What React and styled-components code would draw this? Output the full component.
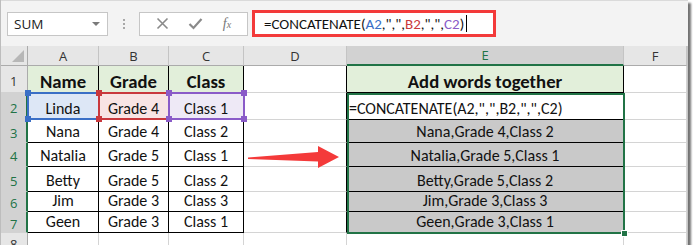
import React from "react";
import styled, { createGlobalStyle, css } from "styled-components";

const Global = createGlobalStyle`
  html, body { margin: 0; padding: 0; background: #ffffff; }
  * { box-sizing: border-box; }
`;

const GREEN = "#217346";
const CELL_FONT = `"Carlito", "Lato", "Liberation Sans", sans-serif`;
const UI_FONT = `"Open Sans", "Noto Sans", sans-serif`;

const Window = styled.div`
  width: 688px;
  height: 245px;
  overflow: hidden;
  background: #ffffff;
  border-left: 1px solid #bdbdbd;
  box-shadow: 3px 3px 2px rgba(0, 0, 0, 0.55);
  display: flex;
  flex-direction: column;
`;

const FormulaBar = styled.div`
  height: 46px;
  flex: none;
  background: #f3f3f3;
  border-top: 1px solid #dadada;
  display: flex;
  align-items: center;
  padding-left: 6px;
`;

const NameBox = styled.div`
  width: 101px;
  height: 24px;
  background: #fff;
  border: 1px solid #c6c6c6;
  display: flex;
  align-items: center;
  justify-content: space-between;
  padding: 0 7px 0 6px;
  font-family: ${UI_FONT};
  font-size: 13.5px;
  color: #222;
`;

const Caret = styled.span`
  width: 0;
  height: 0;
  border-left: 4px solid transparent;
  border-right: 4px solid transparent;
  border-top: 4px solid #7a7a7a;
`;

const Dots = styled.div`
  width: 31px;
  display: flex;
  flex-direction: column;
  align-items: center;
  gap: 2px;
  span {
    width: 2px;
    height: 2px;
    background: #a8a8a8;
  }
`;

const ButtonBox = styled.div`
  width: 109px;
  height: 24px;
  background: #fff;
  border: 1px solid #c6c6c6;
  display: flex;
  align-items: center;
  justify-content: space-around;
  padding: 0 6px;
  color: #8a8a8a;
`;

const Fx = styled.span`
  font-family: "Liberation Serif", serif;
  font-style: italic;
  font-size: 14px;
  color: #777;
  sub { font-size: 10px; vertical-align: baseline; }
`;

const FormulaInput = styled.div`
  margin-left: 4px;
  width: 244px;
  height: 27px;
  background: #fff;
  border: 3px solid #f33a3a;
  display: flex;
  align-items: center;
  padding-left: 9px;
  font-family: ${CELL_FONT};
  font-size: 15px;
  color: #111;
  white-space: pre;
`;

const Ref = styled.span`
  color: ${(p) => p.$c};
`;

const TextCaret = styled.span`
  display: inline-block;
  width: 1px;
  height: 17px;
  background: #000;
  margin-left: 2px;
`;

const Grid = styled.div`
  display: grid;
  grid-template-columns: 27px 71px 70px 75px 103px 277px 63px 2px;
  grid-template-rows: 20px 27px 27px 23px 24px 25px 20px 21px 20px;
  position: relative;
`;

const Cell = styled.div`
  grid-column: ${(p) => p.$c};
  grid-row: ${(p) => p.$r};
  background: ${(p) => p.$bg || "#fff"};
  border-right: 1px solid ${(p) => p.$br || "#d4d4d4"};
  border-bottom: 1px solid ${(p) => p.$bb || "#d4d4d4"};
  display: flex;
  align-items: flex-end;
  justify-content: ${(p) => (p.$left ? "flex-start" : "center")};
  padding: 0 2px ${(p) => (p.$bold ? "0" : "1px")} 2px;
  font-family: ${CELL_FONT};
  font-size: ${(p) => (p.$bold ? "18.7px" : "16px")};
  font-weight: ${(p) => (p.$bold ? 700 : 400)};
  line-height: ${(p) => (p.$bold ? "20px" : "18px")};
  color: #111;
  white-space: nowrap;
  overflow: visible;
  position: relative;
`;

const Head = styled.div`
  grid-column: ${(p) => p.$c};
  grid-row: ${(p) => p.$r};
  background: ${(p) => (p.$sel ? "#d2d2d2" : "#e6e6e6")};
  border-right: ${(p) =>
    p.$rowHead && p.$sel ? `2px solid ${GREEN}` : p.$rowHead ? "1px solid #ababab" : "1px solid #c4c4c4"};
  border-bottom: ${(p) =>
    !p.$rowHead && p.$sel ? `2px solid ${GREEN}` : p.$rowHead ? "1px solid #d2d2d2" : "1px solid #ababab"};
  display: flex;
  align-items: center;
  justify-content: center;
  font-family: ${UI_FONT};
  font-size: 13px;
  color: ${(p) => (p.$sel ? GREEN : "#333")};
  ${(p) =>
    p.$rowHead &&
    css`
      justify-content: flex-start;
      padding-left: 9px;
      padding-top: 3px;
    `}
`;

const Corner = styled.div`
  grid-column: 1;
  grid-row: 1;
  background: #e6e6e6;
  border-right: 1px solid #ababab;
  border-bottom: 1px solid #ababab;
  position: relative;
  &::after {
    content: "";
    position: absolute;
    right: 3px;
    bottom: 3px;
    width: 0;
    height: 0;
    border-left: 12px solid transparent;
    border-bottom: 12px solid #b7b7b7;
  }
`;

const ScrollEdge = styled.div`
  grid-column: 8;
  grid-row: 1 / 10;
  background: #c8c8c8;
`;

const RefBox = styled.div`
  grid-column: ${(p) => p.$c};
  grid-row: ${(p) => p.$r};
  margin: -1px -1px 0 -1px;
  border: 2px solid ${(p) => p.$color};
  position: relative;
  pointer-events: none;
  z-index: ${(p) => p.$z};
`;

const Handle = styled.span`
  position: absolute;
  width: 6px;
  height: 6px;
  background: ${(p) => p.$color};
  ${(p) => (p.$top ? "top: -4px;" : "bottom: -4px;")}
  ${(p) => (p.$lft ? "left: -4px;" : "right: -4px;")}
`;

const Selection = styled.div`
  grid-column: 6;
  grid-row: 3 / 9;
  margin: 0 -1px -1px 0;
  border: 2px solid ${GREEN};
  position: relative;
  pointer-events: none;
  z-index: 5;
`;

const FillHandle = styled.span`
  position: absolute;
  right: -5px;
  bottom: -5px;
  width: 7px;
  height: 7px;
  background: ${GREEN};
  border: 1px solid #fff;
`;

const ArrowSlot = styled.div`
  grid-column: 5;
  grid-row: 5 / 7;
  z-index: 4;
  pointer-events: none;
`;

const rows = [
  ["Name", "Grade", "Class", "", "Add words together"],
  ["Linda", "Grade 4", "Class 1", "", '=CONCATENATE(A2,",",B2,",",C2)'],
  ["Nana", "Grade 4", "Class 2", "", "Nana,Grade 4,Class 2"],
  ["Natalia", "Grade 5", "Class 1", "", "Natalia,Grade 5,Class 1"],
  ["Betty", "Grade 5", "Class 2", "", "Betty,Grade 5,Class 2"],
  ["Jim", "Grade 3", "Class 3", "", "Jim,Grade 3,Class 3"],
  ["Geen", "Grade 3", "Class 1", "", "Geen,Grade 3,Class 1"],
  ["", "", "", "", ""],
];

const refFill = ["#dde7f6", "#f8e4e4", "#eee9f6"];
const refColor = ["#3a6fc6", "#c9383d", "#8a5bc8"];

function cellProps(ri, ci) {
  const sheetRow = ri + 1;
  const p = {};
  const inTable = sheetRow <= 7;
  if (inTable && ci <= 2) {
    p.$br = "#000";
    p.$bb = "#000";
  }
  if (inTable && ci === 3) p.$br = "#000";
  if (inTable && ci === 4) {
    p.$br = "#000";
    p.$bb = "#000";
  }
  if (sheetRow === 1 && (ci <= 2 || ci === 4)) {
    p.$bg = "#e2efda";
    p.$bold = true;
  }
  if (sheetRow === 2 && ci <= 2) p.$bg = refFill[ci];
  if (sheetRow >= 3 && sheetRow <= 7 && ci === 4) p.$bg = "#c9c9c9";
  if (sheetRow === 2 && ci === 4) p.$left = true;
  return p;
}

function Arrow() {
  return (
    <svg width="103" height="49" viewBox="0 0 103 49">
      <polygon
        points="4,14.6 74,9 74,3 95,14 74,25 74,18.5 4,16"
        fill="#f43a3a"
      />
    </svg>
  );
}

export default function App() {
  const letters = ["A", "B", "C", "D", "E", "F"];
  return (
    <>
      <Global />
      <Window>
        <FormulaBar>
          <NameBox>
            SUM
            <Caret />
          </NameBox>
          <Dots>
            <span />
            <span />
            <span />
          </Dots>
          <ButtonBox>
            <svg width="13" height="13" viewBox="0 0 13 13">
              <path d="M1.5 1.5 L11.5 11.5 M11.5 1.5 L1.5 11.5" stroke="#8a8a8a" strokeWidth="1.6" fill="none" />
            </svg>
            <svg width="15" height="13" viewBox="0 0 15 13">
              <path d="M1.5 7 L5.5 11 L13.5 2" stroke="#8a8a8a" strokeWidth="2.2" fill="none" />
            </svg>
            <Fx>
              f<sub>x</sub>
            </Fx>
          </ButtonBox>
          <FormulaInput>
            =CONCATENATE(<Ref $c="#3a6fc6">A2</Ref>,",",<Ref $c="#c9383d">B2</Ref>,",",
            <Ref $c="#8a5bc8">C2</Ref>)<TextCaret />
          </FormulaInput>
        </FormulaBar>
        <Grid>
          <Corner />
          {letters.map((l, i) => (
            <Head key={l} $c={i + 2} $r={1} $sel={l === "E"}>
              {l}
            </Head>
          ))}
          {rows.map((r, ri) => (
            <React.Fragment key={ri}>
              <Head $rowHead $c={1} $r={ri + 2} $sel={ri >= 1 && ri <= 6}>
                {ri + 1}
              </Head>
              {r.map((txt, ci) => (
                <Cell key={ci} $c={ci + 2} $r={ri + 2} {...cellProps(ri, ci)}>
                  {txt}
                </Cell>
              ))}
              <Cell $c={7} $r={ri + 2} />
            </React.Fragment>
          ))}
          <ScrollEdge />
          {refColor.map((c, i) => (
            <RefBox key={c} $c={i + 2} $r={3} $color={c} $z={i + 2}>
              <Handle $color={c} $top $lft />
              <Handle $color={c} $top />
              <Handle $color={c} $lft />
              <Handle $color={c} />
            </RefBox>
          ))}
          <Selection>
            <FillHandle />
          </Selection>
          <ArrowSlot>
            <Arrow />
          </ArrowSlot>
        </Grid>
      </Window>
    </>
  );
}
